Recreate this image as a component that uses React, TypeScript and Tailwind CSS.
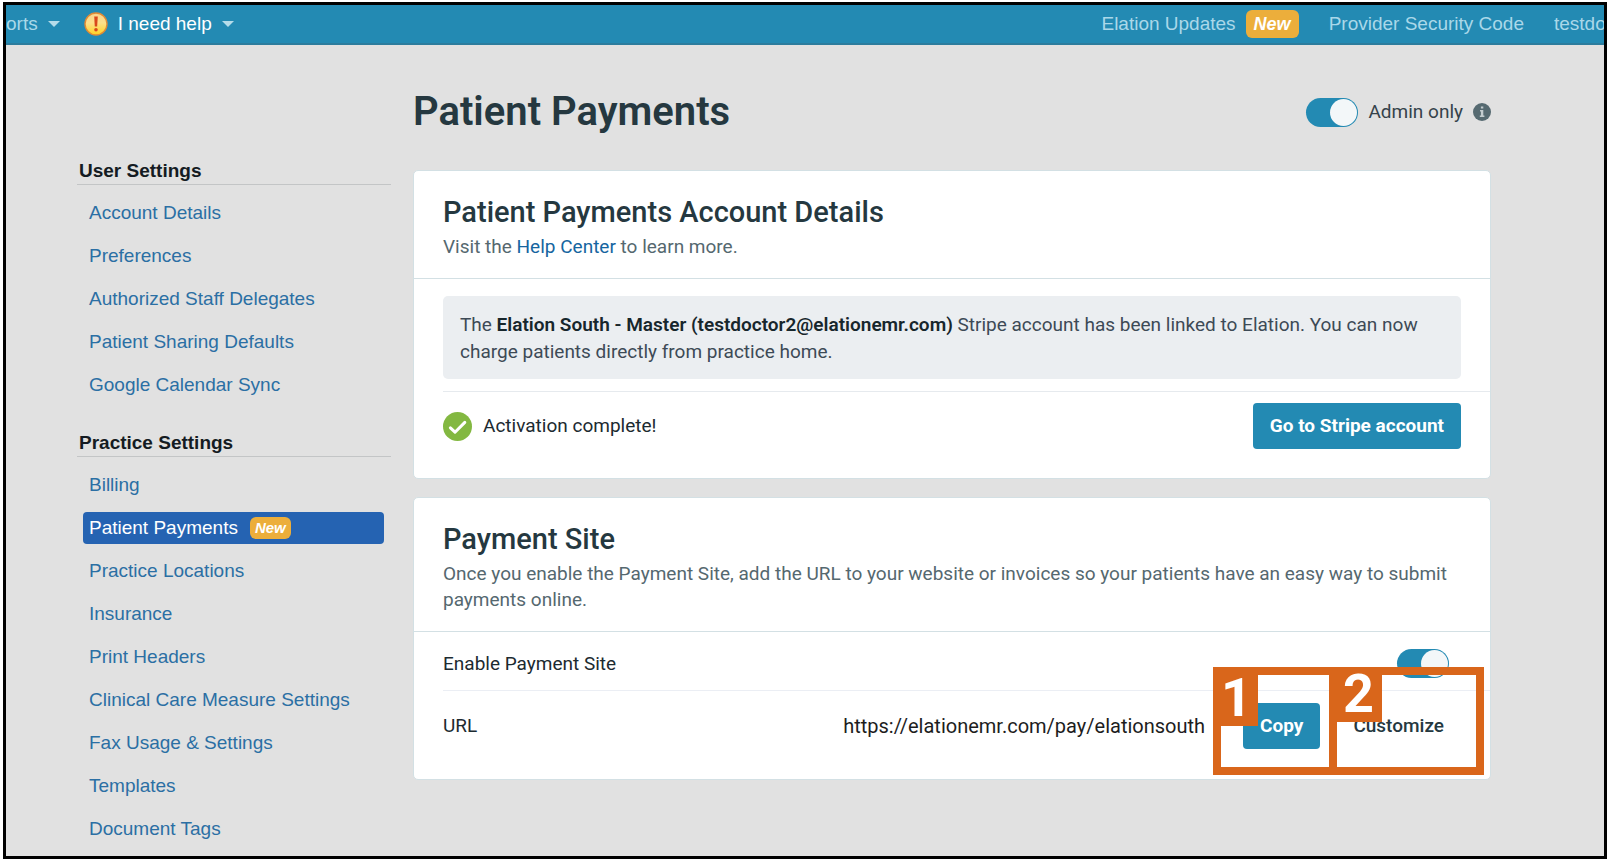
import type { ReactNode } from 'react';

const userLinks = [
  'Account Details',
  'Preferences',
  'Authorized Staff Delegates',
  'Patient Sharing Defaults',
  'Google Calendar Sync',
];

const practiceLinks = [
  'Billing',
  'Patient Payments',
  'Practice Locations',
  'Insurance',
  'Print Headers',
  'Clinical Care Measure Settings',
  'Fax Usage & Settings',
  'Templates',
  'Document Tags',
];

function Caret() {
  return (
    <svg width="12" height="6" viewBox="0 0 12 6" fill="#b5dcea" aria-hidden="true">
      <path d="M0 0h12L6 6z" />
    </svg>
  );
}

function AlertIcon() {
  return (
    <svg width="24" height="24" viewBox="0 0 24 24" aria-hidden="true">
      <defs>
        <linearGradient id="alert" x1="0" y1="0" x2="0" y2="1">
          <stop offset="0" stopColor="#fbd38c" />
          <stop offset="0.45" stopColor="#fde08a" />
          <stop offset="1" stopColor="#ffd21f" />
        </linearGradient>
      </defs>
      <circle cx="12" cy="12" r="11" fill="url(#alert)" stroke="#e08a35" strokeWidth="1.4" />
      <path d="M10.2 4.6h3.6l-.6 10h-2.4z" fill="#d9481c" />
      <circle cx="12" cy="17.8" r="1.8" fill="#d9481c" />
    </svg>
  );
}

function InfoIcon() {
  return (
    <svg width="18" height="18" viewBox="0 0 18 18" aria-hidden="true">
      <circle cx="9" cy="9" r="9" fill="#566a71" />
      <path d="M7.9 3.4h2.4v2.2H7.9zM7 7h3.3v5.4h1.1V14H6.8v-1.6h1.1V8.5H7z" fill="#c3cccf" />
    </svg>
  );
}

function CheckIcon() {
  return (
    <svg width="29" height="29" viewBox="0 0 29 29" aria-hidden="true">
      <circle cx="14.5" cy="14.5" r="14.5" fill="#83b841" />
      <path
        d="M7.4 15.8l4.6 4.4 9.8-9.8"
        fill="none"
        stroke="#fff"
        strokeWidth="3"
        strokeLinecap="round"
        strokeLinejoin="round"
      />
    </svg>
  );
}

function Toggle({ id }: { id: string }) {
  return (
    <input
      id={id}
      type="checkbox"
      defaultChecked
      className="h-[29px] w-[52px] shrink-0 cursor-pointer appearance-none rounded-full bg-gray-400 p-px before:block before:size-[27px] before:rounded-full before:bg-[#f3f7f9] checked:bg-[#238ab3] checked:before:ml-[23px]"
    />
  );
}

function NavSection({ title, links, active }: { title: string; links: string[]; active?: string }) {
  return (
    <section>
      <h2 className="border-b border-[#c3c5c6] pb-px pl-0.5 leading-6 font-bold text-[#141b22]">{title}</h2>
      <ul className="mt-3 mr-[7px] ml-1.5 flex flex-col gap-[11px]">
        {links.map((link) => (
          <li key={link}>
            <a
              href="#"
              className={
                link === active
                  ? 'flex items-center gap-3 rounded bg-[#2563b2] px-1.5 leading-8 text-white'
                  : 'block px-1.5 leading-8 text-[#2b6fa4]'
              }
            >
              {link}
              {link === active && (
                <span className="rounded-md bg-[#ecae3b] px-[5px] text-[15px] leading-[22px] font-bold text-white italic">
                  New
                </span>
              )}
            </a>
          </li>
        ))}
      </ul>
    </section>
  );
}

function Card({ title, intro, children }: { title: string; intro: ReactNode; children: ReactNode }) {
  return (
    <section className="relative rounded-[5px] border border-[#d3e0e4] bg-white">
      <div className="border-b border-[#d3e0e4] px-[29px] pt-[23px] pb-[18px]">
        <h2 className="text-[29px] leading-9 font-medium text-[#253840]">{title}</h2>
        <p className="mt-1 text-[#55686f]">{intro}</p>
      </div>
      {children}
    </section>
  );
}

export default function App() {
  return (
    <div className="flex min-h-screen bg-white pt-0.5 pr-px pb-px pl-[3px] font-['Liberation_Sans',Arial,sans-serif] text-[19px]">
      <div className="min-w-0 flex-1 overflow-hidden border-[3px] border-black bg-[#e1e1e1]">
        <header className="flex h-10 items-center justify-between border-b-2 border-[#2c7c9d] bg-[#238ab3] whitespace-nowrap text-[#aad8e9]">
          <nav className="flex items-center">
            <a href="#" className="flex items-center gap-2.5">
              orts <Caret />
            </a>
            <a href="#" className="ml-6 flex items-center gap-2.5 text-white">
              <AlertIcon />
              <span>I need help</span>
              <Caret />
            </a>
          </nav>
          <nav className="flex items-center gap-[30px]">
            <a href="#" className="flex items-center gap-2.5">
              Elation Updates
              <span className="rounded-md bg-[#ecae3b] px-2 text-lg leading-7 font-bold text-white italic">New</span>
            </a>
            <a href="#">Provider Security Code</a>
            <a href="#" className="w-[50px] overflow-hidden">
              testdo
            </a>
          </nav>
        </header>

        <div className="flex gap-[22px] pr-[113px] pl-[71px]">
          {/* Settings menu */}
          <aside className="flex w-[314px] shrink-0 flex-col gap-[30px] pt-[114px]">
            <NavSection title="User Settings" links={userLinks} />
            <NavSection title="Practice Settings" links={practiceLinks} active="Patient Payments" />
          </aside>

          <main className="min-w-0 flex-1 pt-[43px] font-['Roboto',sans-serif] leading-[26px] text-[#1c2a30]">
            <div className="flex items-center justify-between">
              <h1 className="text-[40px] leading-[48px] font-semibold text-[#253840]">Patient Payments</h1>
              <div className="flex items-center gap-2.5">
                <Toggle id="admin-only" />
                <label htmlFor="admin-only" className="text-[#35434b]">
                  Admin only
                </label>
                <InfoIcon />
              </div>
            </div>

            <div className="mt-[34px] flex flex-col gap-[18px]">
              <Card
                title="Patient Payments Account Details"
                intro={
                  <>
                    Visit the{' '}
                    <a href="#" className="text-[#1565a0]">
                      Help Center
                    </a>{' '}
                    to learn more.
                  </>
                }
              >
                <p className="mx-[29px] mt-[17px] rounded-[5px] bg-[#ebeef1] px-[17px] pt-[15px] pb-3.5 leading-[27px] text-[#3d4a56]">
                  The{' '}
                  <strong className="font-semibold text-[#17262c]">
                    Elation South - Master (testdoctor2@elationemr.com)
                  </strong>{' '}
                  Stripe account has been linked to Elation. You can now charge patients directly from practice home.
                </p>
                <div className="mt-3 ml-[29px] flex items-center gap-[11px] border-t border-[#e6eaee] pt-[11px] pr-[29px] pb-[29px]">
                  <CheckIcon />
                  <span className="flex-1">Activation complete!</span>
                  <button className="h-[46px] rounded bg-[#238ab3] px-[17px] font-bold text-white">
                    Go to Stripe account
                  </button>
                </div>
              </Card>

              <Card
                title="Payment Site"
                intro="Once you enable the Payment Site, add the URL to your website or invoices so your patients have an easy way to submit payments online."
              >
                <div className="ml-[29px] flex items-center justify-between border-b border-[#ebeef4] pt-[17px] pr-[41px] pb-3">
                  <label htmlFor="enable-site">Enable Payment Site</label>
                  <Toggle id="enable-site" />
                </div>
                <div className="ml-[29px] flex items-center pt-3 pr-[29px] pb-[30px]">
                  <span className="flex-1">URL</span>
                  <span className="mr-[38px] text-xl text-[#1d1d1d]">https://elationemr.com/pay/elationsouth</span>
                  <button className="h-[46px] rounded bg-[#238ab3] px-[17px] font-bold text-white">Copy</button>
                  <button className="ml-4 h-[46px] px-[17px] font-medium text-[#253840]">Customize</button>
                </div>

                {/* Numbered step markers */}
                <div className="pointer-events-none absolute right-1.5 bottom-1 flex h-[108px] text-[54px] font-bold text-white">
                  <div className="w-[124px] border-8 border-[#d9661b]">
                    <span className="block h-[51px] w-[37px] bg-[#d9661b] leading-[46px]">1</span>
                  </div>
                  <div className="-ml-2 w-[155px] border-8 border-[#d9661b]">
                    <span className="block h-[47px] w-[45px] bg-[#d9661b] pl-1.5 leading-[38px]">2</span>
                  </div>
                </div>
              </Card>
            </div>
          </main>
        </div>
      </div>
    </div>
  );
}
